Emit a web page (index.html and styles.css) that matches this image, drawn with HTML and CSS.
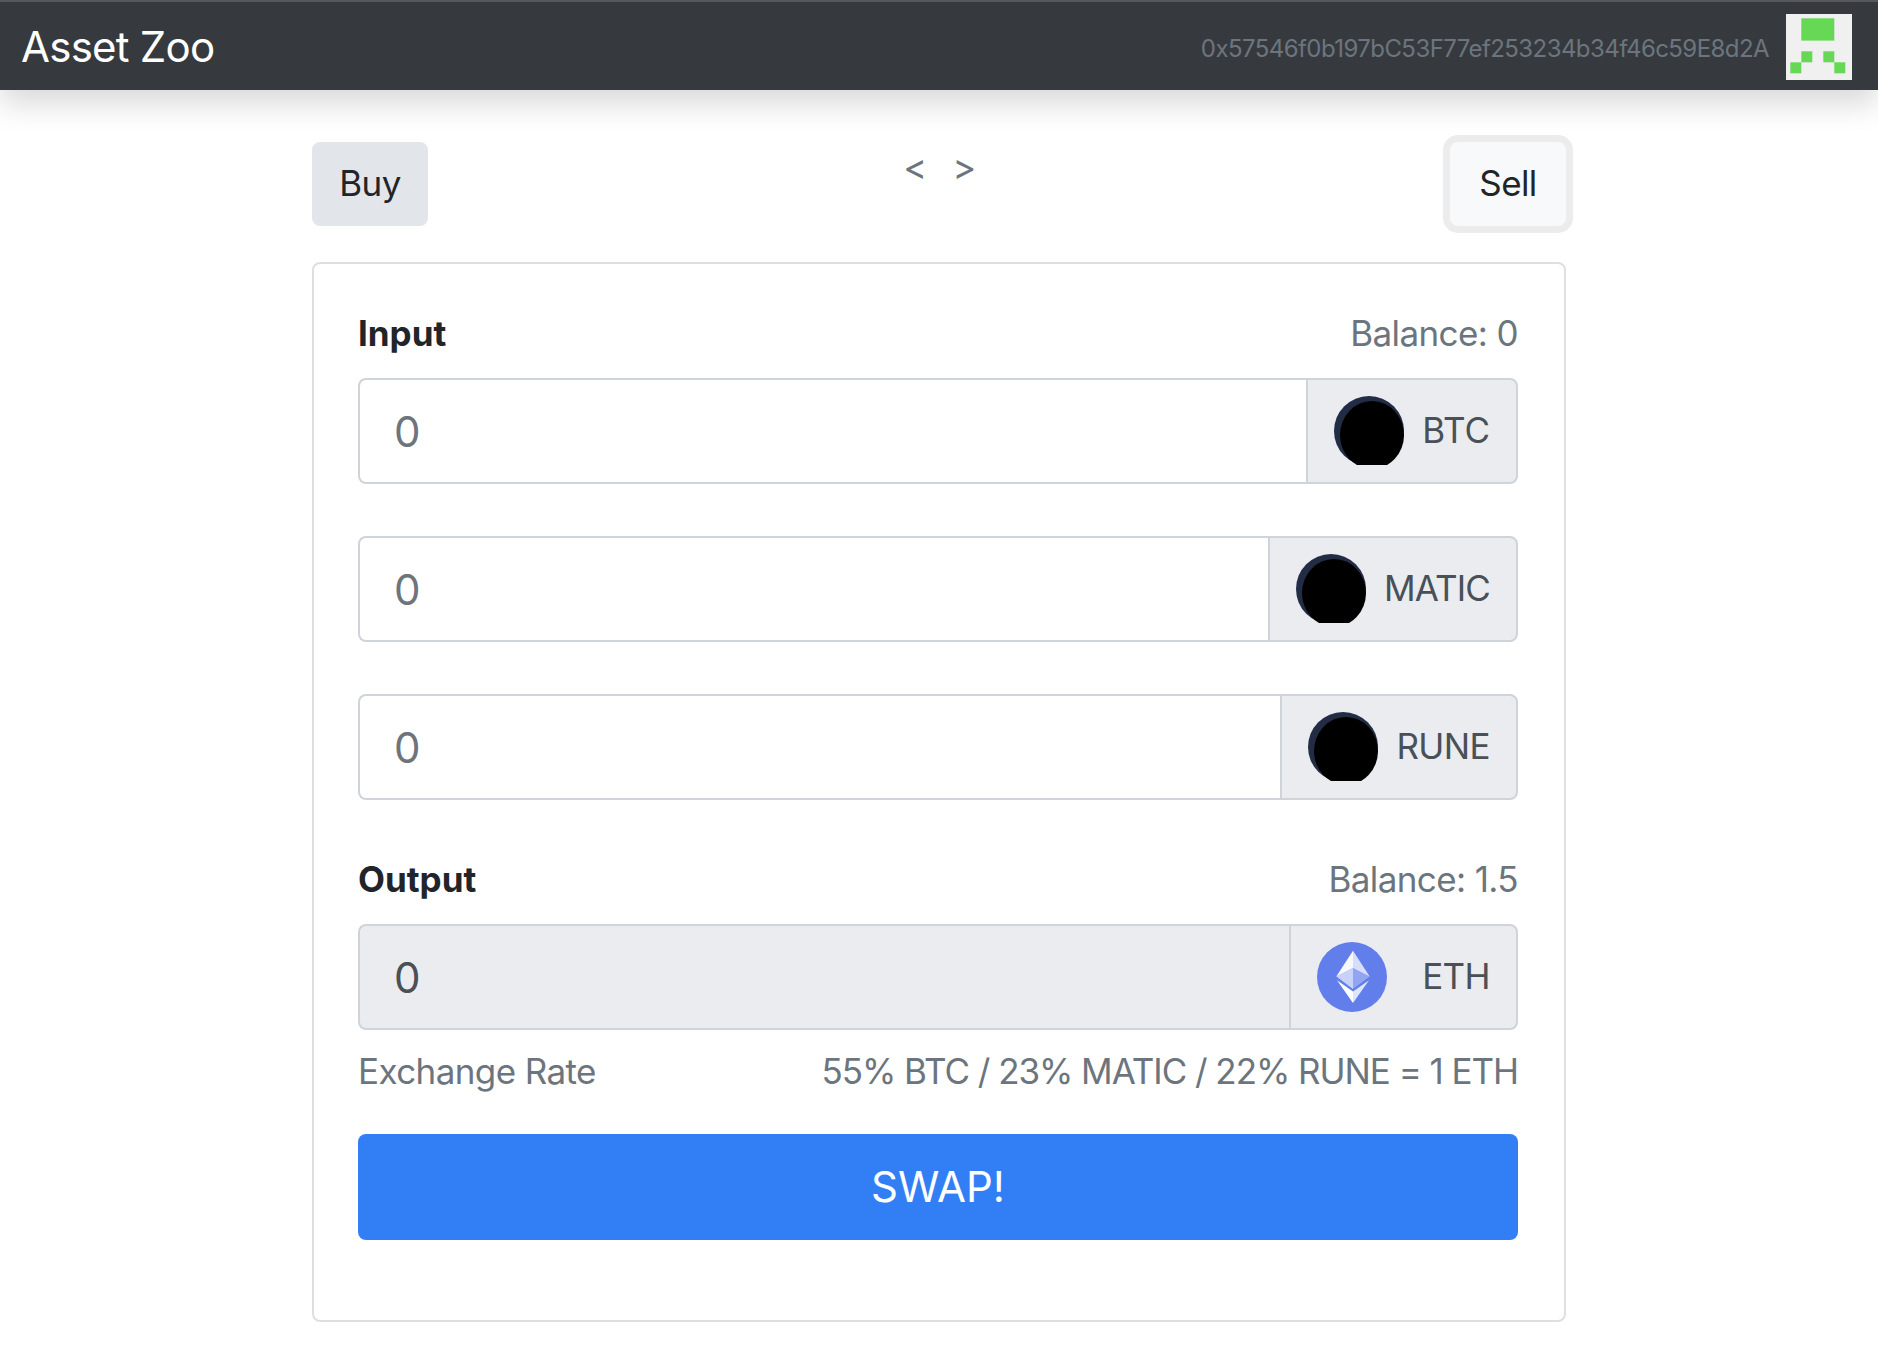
FILE: index.html
```html
<!DOCTYPE html>
<html lang="en">
<head>
    <meta charset="UTF-8">
    <meta name="viewport" content="width=device-width, initial-scale=1.0">
    <title>Asset Zoo</title>
    <link rel="stylesheet" href="styles.css">
</head>
<body>
    <nav class="navbar">
        <a class="brand">Asset Zoo</a>
        <div class="account">
            <span class="address">0x57546f0b197bC53F77ef253234b34f46c59E8d2A</span>
            <svg class="avatar" viewBox="0 0 66 66">
                <rect width="66" height="66" fill="#f0f0f0"/>
                <rect x="15.3" y="4.3" width="33" height="22.3" fill="#66d855"/>
                <rect x="15.3" y="37.3" width="11" height="11" fill="#66d855"/>
                <rect x="37.3" y="37.3" width="11" height="11" fill="#66d855"/>
                <rect x="4.3" y="48.3" width="11" height="11" fill="#66d855"/>
                <rect x="48.3" y="48.3" width="11" height="11" fill="#66d855"/>
            </svg>
        </div>
    </nav>

    <div class="container">
        <div class="tabs">
            <button class="btn btn-buy" type="button">Buy</button>
            <div class="pager">
                <a>&lt;</a>
                <a>&gt;</a>
            </div>
            <button class="btn btn-sell" type="button">Sell</button>
        </div>

        <div class="card">
            <div class="label-row">
                <label>Input</label>
                <span class="muted">Balance: 0</span>
            </div>
            <div class="input-group">
                <input class="amount" type="text" value="0">
                <div class="token token-btc">
                    <svg class="coin" viewBox="0 0 70 70"><use href="#dark-coin"/></svg>
                    <span>BTC</span>
                </div>
            </div>
            <div class="input-group">
                <input class="amount" type="text" value="0">
                <div class="token token-matic">
                    <svg class="coin" viewBox="0 0 70 70"><use href="#dark-coin"/></svg>
                    <span>MATIC</span>
                </div>
            </div>
            <div class="input-group">
                <input class="amount" type="text" value="0">
                <div class="token">
                    <svg class="coin" viewBox="0 0 70 70"><use href="#dark-coin"/></svg>
                    <span>RUNE</span>
                </div>
            </div>

            <div class="label-row output-label">
                <label>Output</label>
                <span class="muted">Balance: 1.5</span>
            </div>
            <div class="input-group output">
                <input class="amount" type="text" value="0" readonly>
                <div class="token">
                    <svg class="coin" viewBox="0 0 70 70">
                        <circle cx="35" cy="35" r="35" fill="#627eea"/>
                        <polygon points="36,8.7 36,26 19.3,34.4" fill="#fff" fill-opacity=".95"/>
                        <polygon points="36,8.7 36,26 52.7,34.4" fill="#fff" fill-opacity=".75"/>
                        <polygon points="19.3,34.4 36,26 36,47" fill="#fff" fill-opacity=".65"/>
                        <polygon points="52.7,34.4 36,26 36,47" fill="#fff" fill-opacity=".3"/>
                        <polygon points="20,38.3 36,49.4 36,61" fill="#fff"/>
                        <polygon points="52,38.3 36,49.4 36,61" fill="#fff" fill-opacity=".8"/>
                    </svg>
                    <span>ETH</span>
                </div>
            </div>

            <div class="rate-row muted">
                <span>Exchange Rate</span>
                <span class="rate-value">55% BTC / 23% MATIC / 22% RUNE = 1 ETH</span>
            </div>

            <button class="btn-swap" type="button">SWAP!</button>
        </div>
    </div>

    <svg class="defs" width="0" height="0">
        <defs>
            <clipPath id="coin-clip">
                <rect width="70" height="69"/>
            </clipPath>
            <g id="dark-coin" clip-path="url(#coin-clip)">
                <circle cx="35" cy="35" r="35" fill="#222c44"/>
                <ellipse cx="38" cy="39" rx="32" ry="34" fill="#000"/>
            </g>
        </defs>
    </svg>
</body>
</html>
```

FILE: styles.css
```css
* {
    box-sizing: border-box;
}

body {
    margin: 0;
    font-family: Inter, "Liberation Sans", sans-serif;
    font-size: 35px;
    letter-spacing: -0.6px;
    color: #212529;
    background-color: #fff;
}

.navbar {
    display: flex;
    justify-content: space-between;
    align-items: center;
    height: 90px;
    padding: 1px 26px 0 21px;
    background-color: #363a3e;
    border-top: 2px solid #55595d;
    box-shadow: 0 14px 28px rgba(0, 0, 0, .15);
}

.brand {
    color: #fff;
    font-size: 42px;
    letter-spacing: -0.75px;
}

.account {
    display: flex;
    align-items: center;
    gap: 17px;
}

.address {
    margin-top: 3px;
    color: #6c757d;
    font-size: 24px;
    letter-spacing: -0.57px;
}

.avatar {
    width: 66px;
    height: 66px;
}

.container {
    width: 1254px;
    margin-left: 312px;
}

.tabs {
    display: flex;
    justify-content: space-between;
    align-items: flex-start;
    margin-top: 52px;
    height: 120px;
}

.btn {
    width: 116px;
    height: 84px;
    padding: 0 0 2px;
    font-family: inherit;
    font-size: 35px;
    letter-spacing: -0.6px;
    color: #212529;
    border: 2px solid #e2e6ea;
    border-radius: 8px;
}

.btn-buy {
    background-color: #e2e6ea;
}

.btn-sell {
    background-color: #f8f9fa;
    border-color: #f8f9fa;
    box-shadow: 0 0 0 7px #ececec;
}

.pager {
    display: flex;
    gap: 26px;
    font-size: 36px;
    color: #6c757d;
    line-height: 50px;
    margin-left: 1px;
}

.card {
    height: 1060px;
    padding: 43px 46px 0 44px;
    border: 2px solid #dfdfdf;
    border-radius: 8px;
}

.label-row,
.rate-row {
    display: flex;
    justify-content: space-between;
    align-items: center;
    height: 52px;
}

.label-row label {
    font-weight: 700;
    letter-spacing: 0;
}

.output-label {
    margin-top: 53px;
}

.muted {
    color: #6c757d;
}

.rate-value {
    letter-spacing: -1.05px;
}

.input-group {
    display: flex;
    height: 106px;
    margin-top: 19px;
    margin-bottom: 52px;
}

.amount {
    flex: 1;
    min-width: 0;
    padding: 0 34px;
    font-family: inherit;
    font-size: 42px;
    color: #6c757d;
    background-color: #fff;
    border: 2px solid #ced4da;
    border-right: none;
    border-radius: 8px 0 0 8px;
    outline: none;
}

.output .amount {
    color: #495057;
    background-color: #eaecf0;
}

.token {
    display: flex;
    align-items: center;
    gap: 18px;
    padding: 0 26px 2px;
    color: #495057;
    background-color: #eaecf0;
    border: 2px solid #ced4da;
    border-radius: 0 8px 8px 0;
}

.token-btc span {
    letter-spacing: -0.1px;
}

.token-matic span {
    letter-spacing: -0.85px;
}

.coin {
    width: 70px;
    height: 70px;
    margin-bottom: -2px;
}

.output {
    margin-bottom: 15px;
}

.output .token {
    gap: 35px;
}

.btn-swap {
    display: block;
    width: 100%;
    height: 106px;
    margin-top: 37px;
    padding-bottom: 3px;
    font-family: inherit;
    font-size: 42px;
    color: #fff;
    background-color: #327ef5;
    border: none;
    border-radius: 8px;
}

.defs {
    position: absolute;
}
```
